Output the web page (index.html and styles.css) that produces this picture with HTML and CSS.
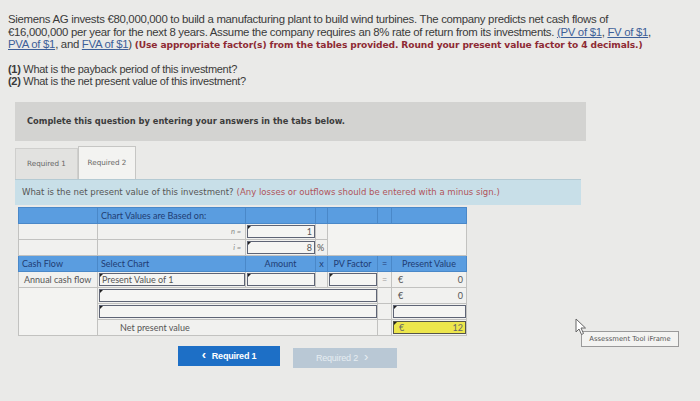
FILE: index.html
```html
<!DOCTYPE html>
<html>
<head>
<meta charset="utf-8">
<link rel="stylesheet" href="styles.css">
</head>
<body>
<div class="page">
  <p class="intro">Siemens AG invests €80,000,000 to build a manufacturing plant to build wind turbines. The company predicts net cash flows of €16,000,000 per year for the next 8 years. Assume the company requires an 8% rate of return from its investments. <a class="lnk">(PV of $1</a>, <a class="lnk">FV of $1</a>, <a class="lnk">PVA of $1</a>, and <a class="lnk">FVA of $1</a>) <span class="warn">(Use appropriate factor(s) from the tables provided. Round your present value factor to 4 decimals.)</span></p>
  <p class="qs"><b>(1)</b> What is the payback period of this investment?<br><b>(2)</b> What is the net present value of this investment?</p>

  <div class="complete">Complete this question by entering your answers in the tabs below.</div>

  <div class="tabs">
    <div class="tab">Required 1</div>
    <div class="tab active">Required 2</div>
  </div>
  <div class="band">What is the net present value of this investment? <span class="red">(Any losses or outflows should be entered with a minus sign.)</span></div>

  <table class="grid">
    <colgroup>
      <col class="c1"><col class="c2"><col class="c3"><col class="c4"><col class="c5"><col class="c6"><col class="c7">
    </colgroup>
    <tr class="hd">
      <td></td><td>Chart Values are Based on:</td><td></td><td></td><td></td><td></td><td></td>
    </tr>
    <tr>
      <td></td><td class="var">n =</td><td class="pad"><div class="inp num">1</div></td><td></td><td colspan="3" rowspan="2" class="blank"></td>
    </tr>
    <tr>
      <td></td><td class="var">i =</td><td class="pad"><div class="inp num">8</div></td><td class="pct">%</td>
    </tr>
    <tr class="hd">
      <td>Cash Flow</td><td>Select Chart</td><td class="ctr">Amount</td><td class="ctr">x</td><td class="ctr">PV Factor</td><td class="ctr">=</td><td class="ctr">Present Value</td>
    </tr>
    <tr>
      <td class="lbl">Annual cash flow</td>
      <td class="pad"><div class="inp">Present Value of 1</div></td>
      <td class="pad"><div class="inp"></div></td>
      <td></td>
      <td class="pad"><div class="inp"></div></td>
      <td class="eq">=</td>
      <td class="money"><span>€</span><span>0</span></td>
    </tr>
    <tr>
      <td rowspan="3" class="blank"></td>
      <td colspan="4" class="pad"><div class="inp"></div></td>
      <td></td>
      <td class="money"><span>€</span><span>0</span></td>
    </tr>
    <tr>
      <td colspan="4" class="pad"><div class="inp"></div></td>
      <td></td>
      <td class="pad"><div class="inp"></div></td>
    </tr>
    <tr>
      <td colspan="4" class="npvtxt">Net present value</td>
      <td></td>
      <td class="pad"><div class="inp yellow"><span>€</span><span>12</span></div></td>
    </tr>
  </table>

  <div class="nav">
    <div class="btn prev"><span class="chev">&lsaquo;</span> Required 1</div>
    <div class="btn next">Required 2 <span class="chev">&rsaquo;</span></div>
  </div>

  <div class="tip">Assessment Tool iFrame</div>
  <svg class="cursor" width="12" height="18" viewBox="0 0 12 18"><path d="M1 1 L1 14 L4 11 L6.5 16.5 L8.5 15.5 L6 10 L10.5 10 Z" fill="#fff" stroke="#666" stroke-width="1"/></svg>
</div>
</body>
</html>
```
FILE: styles.css
```css
html, body {
  margin: 0;
  padding: 0;
  background: #eaeae8;
}
.page {
  position: relative;
  width: 700px;
  height: 401px;
  overflow: hidden;
  font-family: "Liberation Sans", Arial, sans-serif;
  color: #3a3a3a;
}
.intro {
  margin: 0;
  padding: 13px 0 0 8px;
  width: 652px;
  font-size: 11.4px;
  line-height: 12.5px;
  letter-spacing: -0.3px;
}
.lnk {
  color: #3d5f98;
  text-decoration: underline;
}
.warn {
  font-family: "DejaVu Sans", sans-serif;
  font-weight: bold;
  font-size: 9.1px;
  letter-spacing: -0.1px;
  color: #8e2a34;
}
.qs {
  margin: 11px 0 0 8px;
  font-size: 11px;
  line-height: 12.5px;
  letter-spacing: -0.3px;
}
.qs b { font-weight: bold; }
.complete {
  margin: 14px 0 0 15px;
  width: 571px;
  height: 39px;
  box-sizing: border-box;
  padding-left: 12px;
  display: flex;
  align-items: center;
  background: #d3d3d1;
  font-family: "DejaVu Sans", sans-serif;
  font-weight: bold;
  font-size: 8.3px;
  color: #3c3c3c;
}
.tabs {
  display: flex;
  align-items: flex-end;
  margin: 5px 0 0 15px;
  height: 33px;
}
.tab {
  font-family: "DejaVu Sans", sans-serif;
  font-size: 7.2px;
  color: #666;
  box-sizing: border-box;
  height: 31px;
  width: 63px;
  display: flex;
  align-items: center;
  justify-content: center;
  background: #e2e2e0;
  border: 1px solid #cfcfcd;
  border-bottom: none;
}
.tab.active {
  height: 33px;
  width: 58px;
  background: #f3f3f1;
  border-color: #c6c6c4;
}
.band {
  margin-left: 15px;
  width: 566px;
  height: 26px;
  box-sizing: border-box;
  padding-left: 7px;
  display: flex;
  align-items: center;
  background: #c8dfe8;
  border-top: 1px solid #b4cad3;
  font-family: "DejaVu Sans", sans-serif;
  font-size: 8.55px;
  color: #555;
}
.band .red { color: #b0545a; margin-left: 3px; }

.grid {
  margin: 2px 0 0 18px;
  border-collapse: collapse;
  table-layout: fixed;
  width: 448px;
  font-family: Lato, "Open Sans", sans-serif;
  font-size: 9px;
  color: #555;
}
.c1 { width: 79px; }
.c2 { width: 148px; }
.c3 { width: 70px; }
.c4 { width: 12px; }
.c5 { width: 50px; }
.c6 { width: 14px; }
.c7 { width: 75px; }
.grid td {
  height: 13px;
  padding: 1px 3px;
  line-height: 13px;
  border: 1px solid #c2c2c0;
  background: #f1f1ef;
  white-space: nowrap;
  overflow: hidden;
}
.grid tr.hd td {
  background: #5a9de0;
  border-color: #4a88c8;
  color: #1f3c73;
}
.grid td.ctr { text-align: center; padding-left: 0; padding-right: 0; }
.grid td.blank { background: #f3f3f1; }
.grid td.var {
  text-align: right;
  font-style: italic;
  font-size: 7.5px;
  color: #8a8a8a;
  padding-right: 4px;
}
.grid td.pad { padding: 1px 0 1px 1px; }
.grid td.pct { padding-left: 1px; padding-right: 1px; }
.grid td.eq { text-align: center; padding-left: 0; padding-right: 0; color: #999; }
.grid td.lbl { padding-left: 5px; }
.grid td.npvtxt { padding-left: 22px; }
.grid td.money span:first-child { float: left; padding-left: 3px; }
.grid td.money span:last-child { float: right; }
.inp {
  position: relative;
  box-sizing: border-box;
  height: 13px;
  line-height: 11px;
  border: 1px solid #5e6475;
  background: #f5f5f3;
  padding: 0 2px;
  color: #555;
}
.inp::before {
  content: "";
  position: absolute;
  left: 0;
  top: 0;
  border-top: 3px solid #222;
  border-right: 3px solid transparent;
}
.inp.num { text-align: right; }
.inp.yellow {
  background: #ede64c;
  border-color: #55554a;
  display: flex;
  justify-content: space-between;
  color: #666;
}
.inp.yellow span:first-child { padding-left: 3px; }

.nav {
  display: flex;
  gap: 13px;
  margin: 10px 0 0 178px;
}
.btn {
  height: 20px;
  box-sizing: border-box;
  display: flex;
  align-items: center;
  justify-content: center;
  font-family: "Liberation Sans", Arial, sans-serif;
  font-weight: bold;
  font-size: 9px;
  letter-spacing: -0.2px;
}
.btn.prev {
  width: 102px;
  background: #1d6fc6;
  color: #fff;
}
.btn.next {
  width: 104px;
  margin-top: 2px;
  background: #b9c8d5;
  color: #e6edf2;
  font-weight: normal;
}
.chev { font-size: 13px; margin: 0 6px; line-height: 1; position: relative; top: -1px; }
.btn.prev .chev { margin-left: 0; }
.tip {
  position: absolute;
  left: 581px;
  top: 331px;
  width: 98px;
  height: 16px;
  box-sizing: border-box;
  border: 1px solid #9a9a9a;
  background: #f3f3f1;
  font-family: "DejaVu Sans", sans-serif;
  font-size: 6.8px;
  color: #555;
  display: flex;
  align-items: center;
  justify-content: center;
}
.cursor {
  position: absolute;
  left: 575px;
  top: 318px;
}
```
